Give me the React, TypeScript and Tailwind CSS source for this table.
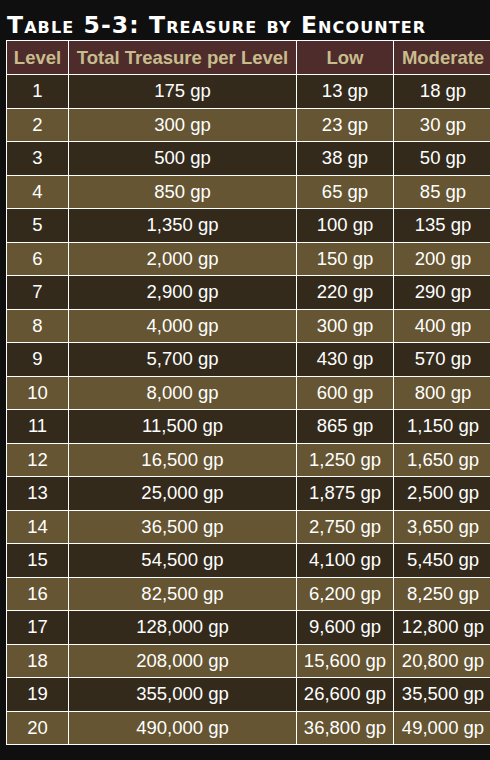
import React from "react";

const rows: [number, string, string, string][] = [
  [1, "175 gp", "13 gp", "18 gp"],
  [2, "300 gp", "23 gp", "30 gp"],
  [3, "500 gp", "38 gp", "50 gp"],
  [4, "850 gp", "65 gp", "85 gp"],
  [5, "1,350 gp", "100 gp", "135 gp"],
  [6, "2,000 gp", "150 gp", "200 gp"],
  [7, "2,900 gp", "220 gp", "290 gp"],
  [8, "4,000 gp", "300 gp", "400 gp"],
  [9, "5,700 gp", "430 gp", "570 gp"],
  [10, "8,000 gp", "600 gp", "800 gp"],
  [11, "11,500 gp", "865 gp", "1,150 gp"],
  [12, "16,500 gp", "1,250 gp", "1,650 gp"],
  [13, "25,000 gp", "1,875 gp", "2,500 gp"],
  [14, "36,500 gp", "2,750 gp", "3,650 gp"],
  [15, "54,500 gp", "4,100 gp", "5,450 gp"],
  [16, "82,500 gp", "6,200 gp", "8,250 gp"],
  [17, "128,000 gp", "9,600 gp", "12,800 gp"],
  [18, "208,000 gp", "15,600 gp", "20,800 gp"],
  [19, "355,000 gp", "26,600 gp", "35,500 gp"],
  [20, "490,000 gp", "36,800 gp", "49,000 gp"],
];

export default function App() {
  return (
    <div className="w-[490px] h-[760px] bg-[#0f0f0f] overflow-hidden font-['Liberation_Sans',Arial,sans-serif]">
      <div className="pl-[7px] pt-[12px] h-[40px]">
        <h1 className="text-white font-bold text-[23.5px] leading-[26px] tracking-[1.1px] [font-variant:small-caps] font-['DejaVu_Sans',sans-serif] whitespace-nowrap">
          Table 5-3: Treasure by Encounter
        </h1>
      </div>
      <table className="ml-[6px] border-collapse w-[486px] table-fixed text-[18.5px] text-center">
        <colgroup>
          <col className="w-[62px]" />
          <col className="w-[228px]" />
          <col className="w-[97px]" />
          <col className="w-[99px]" />
        </colgroup>
        <thead>
          <tr className="h-[34px] bg-[#4e2c2c] text-[#c9bc8c] font-bold">
            <th className="border border-white p-0 whitespace-nowrap">Level</th>
            <th className="border border-white p-0 whitespace-nowrap">Total Treasure per Level</th>
            <th className="border border-white p-0 whitespace-nowrap">Low</th>
            <th className="border border-white p-0 whitespace-nowrap">Moderate</th>
          </tr>
        </thead>
        <tbody>
          {rows.map((r, i) => (
            <tr
              key={r[0]}
              className={`h-[33.5px] text-white ${i % 2 === 0 ? "bg-[#332a1c]" : "bg-[#655532]"}`}
            >
              <td className="border border-white p-0 whitespace-nowrap">{r[0]}</td>
              <td className="border border-white p-0 whitespace-nowrap">{r[1]}</td>
              <td className="border border-white p-0 whitespace-nowrap">{r[2]}</td>
              <td className="border border-white p-0 whitespace-nowrap">{r[3]}</td>
            </tr>
          ))}
        </tbody>
      </table>
    </div>
  );
}
